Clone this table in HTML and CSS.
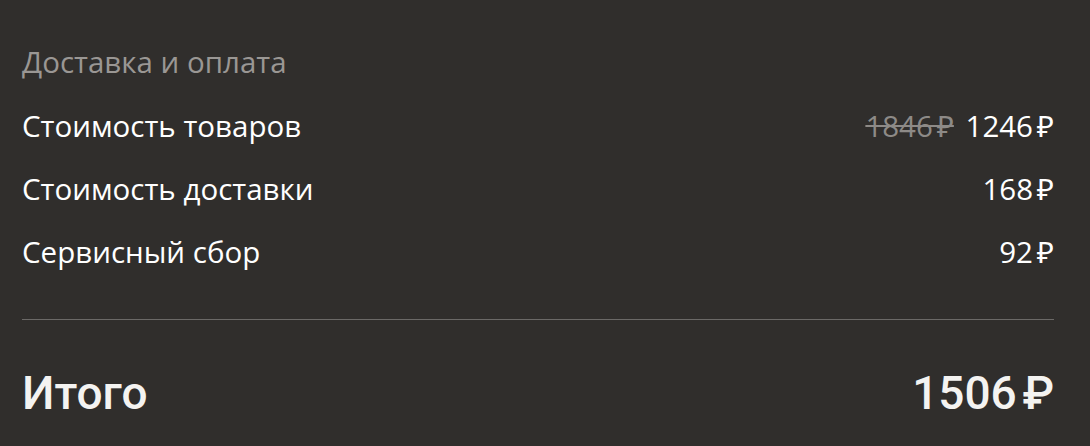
FILE: index.html
```html
<!DOCTYPE html>
<html>
<head>
    <title>Доставка и оплата</title>
    <link rel="stylesheet" href="styles.css">
</head>
<body>
    <div class="summary">
        <h3 class="summary-title">Доставка и оплата</h3>

        <div class="summary-rows">
            <div class="summary-row">
                <span>Стоимость товаров</span>
                <span class="price"><s class="old-price">1846&#8239;₽</s> 1246&#8239;₽</span>
            </div>
            <div class="summary-row">
                <span>Стоимость доставки</span>
                <span class="price">168&#8239;₽</span>
            </div>
            <div class="summary-row">
                <span>Сервисный сбор</span>
                <span class="price">92&#8239;₽</span>
            </div>
        </div>

        <div class="divider"></div>

        <div class="summary-total">
            <span>Итого</span>
            <span class="price">1506&#8239;₽</span>
        </div>
    </div>
</body>
</html>
```

FILE: styles.css
```css
body {
    margin: 0;
    background-color: #302e2c;
    color: #ffffff;
    font-family: 'Open Sans', 'Noto Sans', sans-serif;
}
.summary {
    padding: 40px 36px 0 22px;
}
.summary-title {
    margin: 0;
    font-size: 29.5px;
    font-weight: 400;
    color: #9a9794;
    line-height: 44px;
}
.summary-rows {
    margin-top: 10px;
}
.summary-row {
    display: flex;
    justify-content: space-between;
    font-size: 29.5px;
    line-height: 63px;
}
.old-price {
    color: #8d8a87;
    margin-right: 4px;
}
.divider {
    height: 1px;
    background: #6b6967;
    margin-top: 36px;
}
.summary-total {
    display: flex;
    justify-content: space-between;
    font-family: Roboto, 'Open Sans', sans-serif;
    font-size: 46px;
    font-weight: 500;
    color: #f4f3f1;
    line-height: 72px;
    margin-top: 37px;
}
```
